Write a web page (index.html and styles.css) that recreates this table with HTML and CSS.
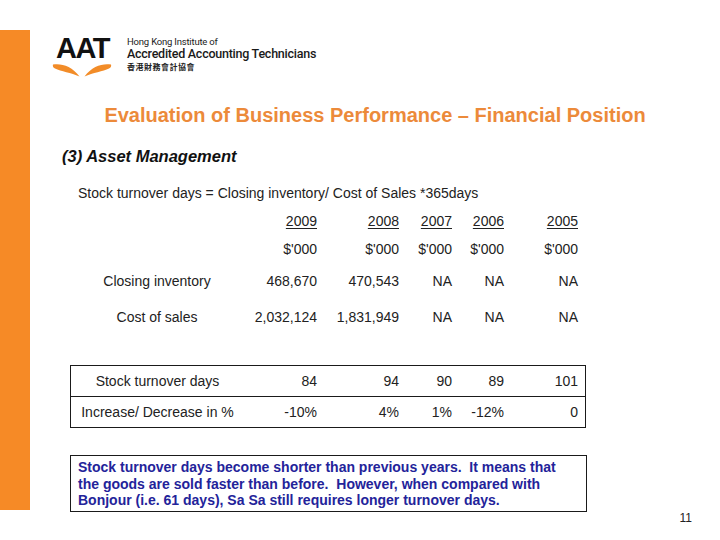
FILE: index.html
```html
<!DOCTYPE html>
<html lang="en">
<head>
<meta charset="utf-8">
<title>Evaluation of Business Performance – Financial Position</title>
<link rel="stylesheet" href="styles.css">
</head>
<body>
<div class="slide">
  <div class="bar"></div>
  <main class="content">
    <header class="brand">
      <div class="logo">
        <span class="logo-text">AAT</span>
        <svg class="leaves" viewBox="0 0 60 14" width="60" height="14" aria-hidden="true">
          <path d="M1 1.5 C9 0 20 3 27.5 13.5 C19 9.5 9 8.5 3 5.5 C1 4.5 0.5 3 1 1.5 Z" fill="#F28C28"/>
          <path d="M59 1.5 C51 0 40 3 32.5 13.5 C41 9.5 51 8.5 57 5.5 C59 4.5 59.5 3 59 1.5 Z" fill="#F28C28"/>
        </svg>
      </div>
      <div class="brand-text">
        <div class="brand-small">Hong Kong Institute of</div>
        <div class="brand-big">Accredited Accounting Technicians</div>
        <div class="brand-cjk">香港財務會計協會</div>
      </div>
    </header>

    <h1 class="title">Evaluation of Business Performance – Financial Position</h1>
    <h2 class="section">(3) Asset Management</h2>
    <p class="formula">Stock turnover days = Closing inventory/ Cost of Sales *365days</p>

    <div class="fin-table">
      <div class="row head">
        <span class="label"></span>
        <span class="num"><u>2009</u></span>
        <span class="num"><u>2008</u></span>
        <span class="num"><u>2007</u></span>
        <span class="num"><u>2006</u></span>
        <span class="num"><u>2005</u></span>
      </div>
      <div class="row head">
        <span class="label"></span>
        <span class="num">$'000</span>
        <span class="num">$'000</span>
        <span class="num">$'000</span>
        <span class="num">$'000</span>
        <span class="num">$'000</span>
      </div>
      <div class="row data">
        <span class="label">Closing inventory</span>
        <span class="num">468,670</span>
        <span class="num">470,543</span>
        <span class="num">NA</span>
        <span class="num">NA</span>
        <span class="num">NA</span>
      </div>
      <div class="row data">
        <span class="label">Cost of sales</span>
        <span class="num">2,032,124</span>
        <span class="num">1,831,949</span>
        <span class="num">NA</span>
        <span class="num">NA</span>
        <span class="num">NA</span>
      </div>
    </div>

    <div class="summary">
      <div class="row">
        <span class="label">Stock turnover days</span>
        <span class="num">84</span>
        <span class="num">94</span>
        <span class="num">90</span>
        <span class="num">89</span>
        <span class="num">101</span>
      </div>
      <div class="row divided">
        <span class="label">Increase/ Decrease in %</span>
        <span class="num">-10%</span>
        <span class="num">4%</span>
        <span class="num">1%</span>
        <span class="num">-12%</span>
        <span class="num">0</span>
      </div>
    </div>

    <div class="note">Stock turnover days become shorter than previous years.&nbsp; It means that the goods are sold faster than before.&nbsp; However, when compared with Bonjour (i.e. 61 days), Sa Sa still requires longer turnover days.</div>

    <div class="page-num">11</div>
  </main>
</div>
</body>
</html>
```

FILE: styles.css
```css
html, body {
  margin: 0;
  padding: 0;
  background: #ffffff;
}

body {
  font-family: "Liberation Sans", Arial, sans-serif;
  color: #1c1c1c;
}

.slide {
  width: 720px;
  height: 540px;
  display: grid;
  grid-template-columns: 30px 1fr;
  overflow: hidden;
}

.bar {
  margin-top: 30px;
  height: 480px;
  background: #F68A26;
}

.content {
  display: flex;
  flex-direction: column;
}

/* Brand header */
.brand {
  display: flex;
  align-items: flex-start;
  margin-top: 34px;
  margin-left: 22px;
  height: 44px;
}

.logo {
  display: flex;
  flex-direction: column;
  align-items: center;
  width: 60px;
}

.logo-text {
  font-family: "Liberation Sans", Arial, sans-serif;
  font-weight: bold;
  font-size: 29px;
  line-height: 29px;
  letter-spacing: -1.5px;
  color: #111111;
  margin-left: 1px;
}

.leaves {
  display: block;
}

.brand-text {
  margin-left: 15px;
  display: flex;
  flex-direction: column;
  color: #222222;
  font-family: Roboto, "Liberation Sans", sans-serif;
}

.brand-small {
  font-size: 9.5px;
  line-height: 11px;
  margin-top: 2px;
  letter-spacing: -0.2px;
}

.brand-big {
  font-size: 12.5px;
  font-weight: 500;
  line-height: 14px;
  letter-spacing: -0.25px;
  color: #1a1a1a;
}

.brand-cjk {
  font-family: "Noto Sans CJK TC", "Noto Sans CJK SC", sans-serif;
  font-size: 8px;
  font-weight: bold;
  line-height: 10px;
  margin-top: 1px;
  letter-spacing: 0.5px;
}

/* Title */
.title {
  margin: 27px 0 0 0;
  text-align: center;
  font-size: 20px;
  line-height: 20px;
  font-weight: bold;
  color: #EC8A3A;
}

.section {
  margin: 21px 0 0 32px;
  font-size: 16.5px;
  line-height: 20px;
  font-weight: bold;
  font-style: italic;
  color: #111111;
}

.formula {
  margin: 18px 0 0 48px;
  font-size: 14px;
  line-height: 18px;
  color: #222222;
}

/* Financial table */
.fin-table,
.summary {
  margin-left: 40px;
  width: 515px;
  box-sizing: border-box;
  font-size: 14px;
  color: #222222;
}

.fin-table {
  margin-top: 5px;
  padding-right: 7px;
}

.row {
  display: grid;
  grid-template-columns: 174px 73px 82px 53px 52px 74px;
  align-items: center;
}

.fin-table .head {
  height: 28px;
}

.fin-table .data {
  height: 36px;
}

.label {
  text-align: center;
}

.num {
  text-align: right;
}

.num u {
  text-underline-offset: 2px;
}

/* Summary box */
.summary {
  margin-top: 30px;
  width: 516px;
  border: 1px solid #1a1a1a;
  padding-right: 7px;
}

.summary .row {
  height: 30px;
  grid-template-columns: 173px 73px 82px 53px 52px 74px;
}

.summary .row.divided {
  border-top: 1px solid #1a1a1a;
  margin-right: -7px;
  padding-right: 7px;
}

/* Note box */
.note {
  margin: 27px 0 0 40px;
  width: 517px;
  box-sizing: border-box;
  border: 1px solid #1a1a1a;
  padding: 3px 22px 2px 7px;
  font-size: 14px;
  line-height: 16.5px;
  font-weight: bold;
  color: #23239A;
}

.page-num {
  text-align: right;
  padding-right: 28px;
  font-size: 12px;
  line-height: 12px;
  color: #222222;
}
```
